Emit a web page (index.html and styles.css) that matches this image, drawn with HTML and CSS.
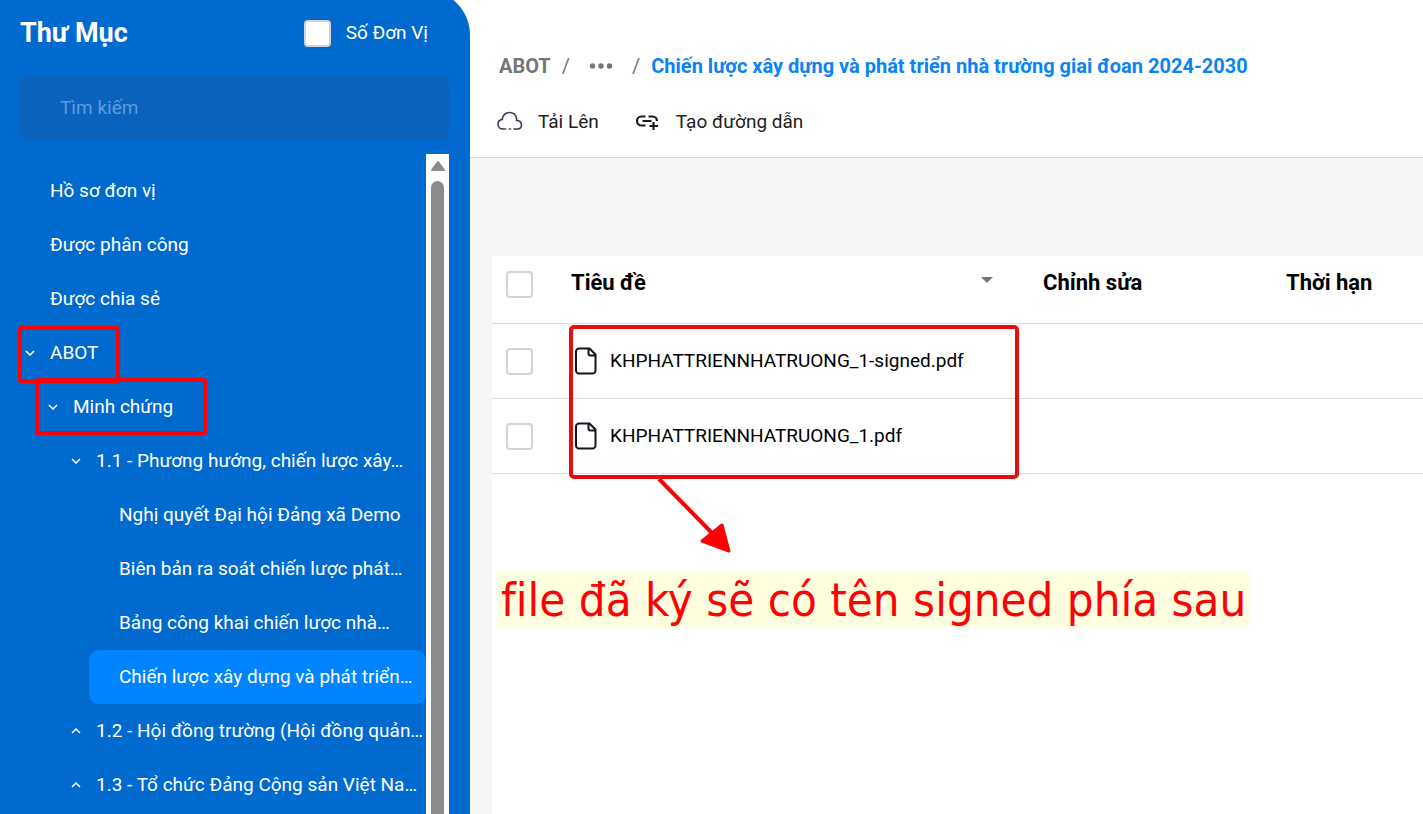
FILE: index.html
```
<!DOCTYPE html>
<html lang="vi">
	<head>
		<title>Thư Mục</title>
		<meta charset="UTF-8" />
		<link rel="stylesheet" href="styles.css">
	</head>
	<body>
		<!-- Folder sidebar -->
		<aside class="sidebar">
			<div class="sidebar-head">
				<h1 class="sidebar-title">Thư Mục</h1>
				<input type="checkbox" class="checkbox" id="unitNumber"/>
				<label for="unitNumber">Số Đơn Vị</label>
			</div>
			<input type="search" class="search" placeholder="Tìm kiếm" aria-label="Tìm kiếm"/>
			<div class="tree-wrap">
				<ul class="tree">
					<li><button class="node" type="button"><span class="toggle"></span>Hồ sơ đơn vị</button></li>
					<li><button class="node" type="button"><span class="toggle"></span>Được phân công</button></li>
					<li><button class="node" type="button"><span class="toggle"></span>Được chia sẻ</button></li>
					<li>
						<button class="node" type="button"><span class="toggle"><svg class="chevron" viewBox="0 0 10 6"><path d="M1 1l4 4 4-4"/></svg></span>ABOT</button>
						<ul>
							<li>
								<button class="node" type="button"><span class="toggle"><svg class="chevron" viewBox="0 0 10 6"><path d="M1 1l4 4 4-4"/></svg></span>Minh chứng</button>
								<ul>
									<li>
										<button class="node" type="button"><span class="toggle"><svg class="chevron" viewBox="0 0 10 6"><path d="M1 1l4 4 4-4"/></svg></span>1.1 - Phương hướng, chiến lược xây…</button>
										<ul>
											<li><button class="node" type="button"><span class="toggle"></span>Nghị quyết Đại hội Đảng xã Demo</button></li>
											<li><button class="node" type="button"><span class="toggle"></span>Biên bản ra soát chiến lược phát…</button></li>
											<li><button class="node" type="button"><span class="toggle"></span>Bảng công khai chiến lược nhà…</button></li>
											<li><button class="node active" type="button"><span class="toggle"></span>Chiến lược xây dựng và phát triển…</button></li>
										</ul>
									</li>
									<li><button class="node" type="button"><span class="toggle"><svg class="chevron" viewBox="0 0 10 6"><path d="M1 5l4-4 4 4"/></svg></span>1.2 - Hội đồng trường (Hội đồng quản…</button></li>
									<li><button class="node" type="button"><span class="toggle"><svg class="chevron" viewBox="0 0 10 6"><path d="M1 5l4-4 4 4"/></svg></span>1.3 - Tổ chức Đảng Cộng sản Việt Na…</button></li>
								</ul>
							</li>
						</ul>
					</li>
				</ul>
				<div class="scrollbar">
					<svg class="scroll-up" viewBox="0 0 14 10"><path d="M7 1l6 8H1z"/></svg>
					<div class="scroll-thumb"></div>
				</div>
			</div>
		</aside>

		<main class="content">
			<header class="content-head">
				<nav class="breadcrumb">
					<a class="crumb" href="#">ABOT</a>
					<span class="slash">/</span>
					<button class="more" type="button" aria-label="ABOT">
						<svg viewBox="0 0 24 6"><circle cx="3.500" cy="3" r="2.700"/><circle cx="12" cy="3" r="2.700"/><circle cx="20.500" cy="3" r="2.700"/></svg>
					</button>
					<span class="slash">/</span>
					<a class="crumb current" href="#">Chiến lược xây dựng và phát triển nhà trường giai đoan 2024-2030</a>
				</nav>
				<div class="actions">
					<button class="action" type="button">
						<svg class="action-icon" viewBox="0 0 26 20"><path class="cloud" d="M8.500 18H6C3 18 1 16 1 13.200 1 10.600 2.800 8.800 5.300 8.400 5.600 4.400 8.600 1.500 12.500 1.500c3.500 0 6.300 2.200 7 5.600M17 18h3.500c2.300 0 4-1.600 4-3.900 0-2.900-2.300-4.600-5-4.600M19.500 7.100c.2.800.2 1.600 0 2.400M12.500 18h1"/></svg>
						Tải Lên
					</button>
					<button class="action" type="button">
						<svg class="action-icon" viewBox="0 0 26 20"><path class="link" d="M10.500 5.500H6.500a4.500 4.500 0 0 0 0 9h4M7.500 10h9M13.500 5.500h4a4.500 4.500 0 0 1 4.500 4.500M18.500 11v8M14.500 15h8.500"/></svg>
						Tạo đường dẫn
					</button>
				</div>
			</header>

			<div class="files">
				<table class="files-table">
					<colgroup>
						<col class="col-check">
						<col class="col-title">
						<col class="col-edit">
						<col>
					</colgroup>
					<thead>
						<tr>
							<th><input type="checkbox" class="checkbox" aria-label="Tiêu đề"/></th>
							<th>
								<div class="sortable">Tiêu đề <svg class="caret" viewBox="0 0 12 6"><path d="M0 0h12L6 6z"/></svg></div>
							</th>
							<th>Chỉnh sửa</th>
							<th>Thời hạn</th>
						</tr>
					</thead>
					<tbody>
						<tr>
							<td><input type="checkbox" class="checkbox" id="file1"/></td>
							<td>
								<label class="file" for="file1">
									<svg class="file-icon" viewBox="0 0 22 28"><path d="M4 1.500h10.500l6 6V23.500a3 3 0 0 1-3 3H4a3 3 0 0 1-3-3v-19a3 3 0 0 1 3-3zM13.500 1.500v5a2 2 0 0 0 2 2h5"/></svg>
									<span class="file-name">KHPHATTRIENNHATRUONG_1-signed.pdf</span>
								</label>
							</td>
							<td></td>
							<td></td>
						</tr>
						<tr>
							<td><input type="checkbox" class="checkbox" id="file2"/></td>
							<td>
								<label class="file" for="file2">
									<svg class="file-icon" viewBox="0 0 22 28"><path d="M4 1.500h10.500l6 6V23.500a3 3 0 0 1-3 3H4a3 3 0 0 1-3-3v-19a3 3 0 0 1 3-3zM13.500 1.500v5a2 2 0 0 0 2 2h5"/></svg>
									<span class="file-name">KHPHATTRIENNHATRUONG_1.pdf</span>
								</label>
							</td>
							<td></td>
							<td></td>
						</tr>
					</tbody>
				</table>
			</div>
		</main>

		<!-- Red marks over the page -->
		<div class="mark mark-abot"></div>
		<div class="mark mark-evidence"></div>
		<div class="mark mark-files"></div>
		<svg class="arrow" viewBox="0 0 76 80"><path class="arrow-line" d="M3 2l54 55"/><path class="arrow-head" d="M66 48l7 26-27-10z"/></svg>
		<p class="note">file đã ký sẽ có tên signed phía sau</p>
	</body>
</html>
```
FILE: styles.css
```
* {
	box-sizing: border-box;
}

body {
	display: flex;
	height: 100vh;
	margin: 0;
	overflow: hidden;
	font-family: Roboto, sans-serif;
	font-size: 19px;
	color: #000;
	background-color: #fff;
}

button {
	padding: 0;
	border: none;
	background: none;
	font: inherit;
	color: inherit;
	cursor: pointer;
}

ul {
	margin: 0;
	padding: 0;
	list-style: none;
}

.checkbox {
	appearance: none;
	display: block;
	flex: none;
	width: 27px;
	height: 27px;
	margin: 0;
	border: 2px solid #d3d2de;
	border-radius: 4px;
	background-color: #fff;
}

/* Sidebar */
.sidebar {
	display: flex;
	flex-direction: column;
	flex: none;
	width: 470px;
	margin-top: -10px;
	padding: 20px 21px 0 20px;
	border-top-right-radius: 45px;
	background-color: #006acf;
	color: #fff;
}

.sidebar-head {
	display: flex;
	align-items: center;
	height: 46px;
	padding-right: 21px;
}

.sidebar-title {
	flex: 1;
	margin: 0;
	font-size: 27px;
	font-weight: 700;
}

.sidebar-head .checkbox {
	margin-right: 15px;
}

.sidebar-head label {
	padding-bottom: 2px;
}

.search {
	height: 64px;
	margin: 20px 0 14px;
	padding: 0 40px 2px;
	border: none;
	border-radius: 8px;
	background-color: #0a62bd;
	font: inherit;
	color: #fff;
}

.search::placeholder {
	color: #5c9ddf;
}

.tree-wrap {
	display: flex;
	flex: 1;
	min-height: 0;
}

.tree {
	flex: 1;
	min-width: 0;
	padding-top: 10px;
	overflow: hidden;
}

.tree ul {
	padding-left: 23px;
}

.node {
	display: flex;
	align-items: center;
	width: 100%;
	height: 54px;
	padding-bottom: 2px;
	border-radius: 10px;
	font-weight: 400;
	white-space: nowrap;
}

.node.active {
	background-color: #0084ff;
}

.toggle {
	display: flex;
	justify-content: center;
	flex: none;
	width: 20px;
	padding-top: 2px;
	margin-right: 10px;
}

.chevron {
	width: 10px;
	height: 6px;
	fill: none;
	stroke: #fff;
	stroke-width: 1.5;
}

.scrollbar {
	display: flex;
	flex-direction: column;
	align-items: center;
	width: 23px;
	padding-top: 7px;
	background-color: #fcfcfc;
}

.scroll-up {
	flex: none;
	width: 14px;
	height: 10px;
	margin-bottom: 10px;
	fill: #8b8b8b;
	stroke: #8b8b8b;
	stroke-width: 2;
	stroke-linejoin: round;
}

.scroll-thumb {
	flex: 1;
	width: 13px;
	border-radius: 7px 7px 0 0;
	background-color: #8b8b8b;
}

/* Content */
.content {
	display: flex;
	flex-direction: column;
	flex: 1;
	min-width: 0;
	background-color: #f6f6f9;
}

.content-head {
	height: 158px;
	padding: 50px 27px 0;
	border-bottom: 1px solid #d9d9dc;
	background-color: #fff;
}

.breadcrumb {
	display: flex;
	align-items: center;
	height: 32px;
	padding-left: 2px;
	font-size: 20px;
	color: #757575;
	white-space: nowrap;
}

.crumb {
	font-weight: 700;
	color: inherit;
	text-decoration: none;
}

.crumb.current {
	color: #0a84f5;
}

.slash {
	margin: 0 11px;
}

.more {
	display: flex;
	margin: 0 8px;
}

.more svg {
	width: 24px;
	height: 6px;
	fill: #757575;
}

.actions {
	display: flex;
	gap: 36px;
	margin-top: 23px;
}

.action {
	display: flex;
	align-items: center;
	height: 32px;
	color: #212121;
}

.action-icon {
	width: 26px;
	height: 20px;
	margin-right: 15px;
	fill: none;
}

.cloud {
	stroke: #3c3a4e;
	stroke-width: 1.6;
	stroke-linecap: round;
}

.link {
	stroke: #1c1c1c;
	stroke-width: 2.2;
}

.files {
	flex: 1;
	margin: 98px 0 0 22px;
	background-color: #fff;
}

.files-table {
	width: 100%;
	border-collapse: separate;
	border-spacing: 0;
	table-layout: fixed;
}

.col-check {
	width: 79px;
}

.col-title {
	width: 472px;
}

.col-edit {
	width: 243px;
}

.files-table th,
.files-table td {
	height: 75px;
	padding: 0;
	border-bottom: 1px solid #dedee0;
	text-align: left;
}

.files-table th {
	height: 68px;
	padding-bottom: 14px;
	font-size: 22px;
	font-weight: 700;
}

.files-table th:first-child {
	padding-bottom: 10px;
}

.files-table td .checkbox,
.files-table th .checkbox {
	margin-left: 14px;
}

.sortable {
	display: flex;
	align-items: center;
	justify-content: space-between;
	padding-right: 50px;
}

.caret {
	width: 12px;
	height: 6px;
	margin-bottom: 6px;
	fill: #757575;
}

.file {
	display: flex;
	align-items: center;
	padding-left: 4px;
}

.file-name {
	padding-bottom: 2px;
}

.file-icon {
	width: 22px;
	height: 28px;
	margin-right: 13px;
	fill: none;
	stroke: #15151f;
	stroke-width: 2;
	stroke-linejoin: round;
}

/* Marks */
.mark {
	position: absolute;
	border: 4px solid #fb0207;
	border-radius: 3px;
	pointer-events: none;
}

.mark-abot {
	left: 18px;
	top: 326px;
	width: 102px;
	height: 57px;
}

.mark-evidence {
	left: 35px;
	top: 378px;
	width: 172px;
	height: 57px;
}

.mark-files {
	left: 569px;
	top: 325px;
	width: 450px;
	height: 154px;
	border-color: #e80c10;
	border-radius: 5px;
}

.arrow {
	position: absolute;
	left: 656px;
	top: 477px;
	width: 76px;
	height: 80px;
}

.arrow-line {
	fill: none;
	stroke: #fb0207;
	stroke-width: 4;
}

.arrow-head {
	fill: #fb0207;
	stroke: #fb0207;
	stroke-width: 3;
	stroke-linejoin: round;
}

.note {
	position: absolute;
	left: 497px;
	top: 571px;
	margin: 0;
	padding: 0 4px;
	background-color: #ffffe0;
	font-family: "DejaVu Sans Condensed", "DejaVu Sans", sans-serif;
	font-size: 47px;
	font-variant-ligatures: none;
	line-height: 57px;
	color: #fb0207;
	white-space: nowrap;
}
```
